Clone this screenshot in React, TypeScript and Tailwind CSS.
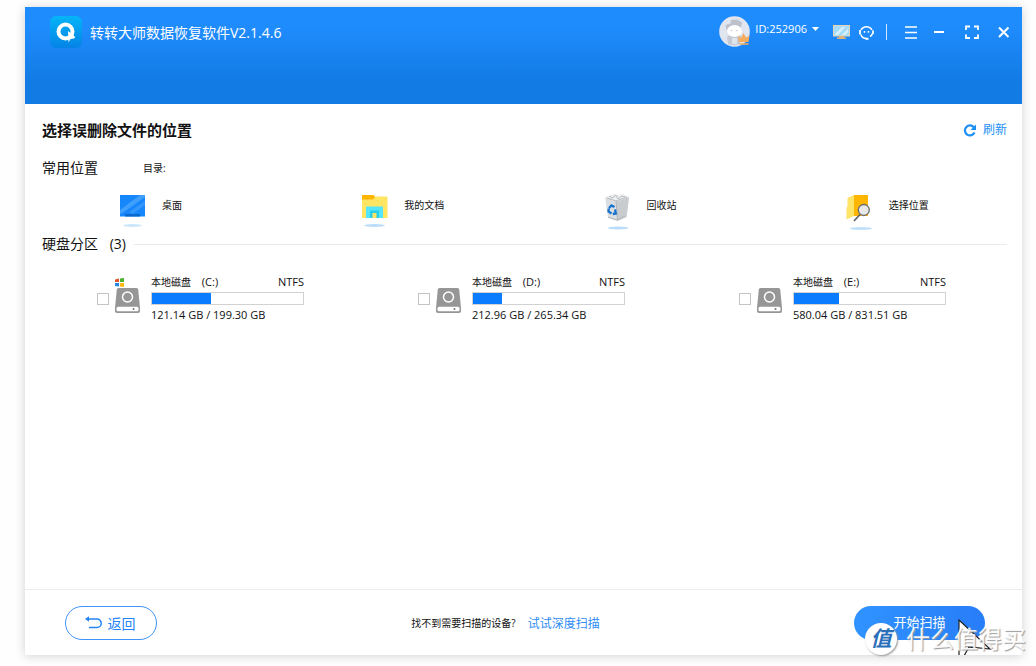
import { FC, ReactNode } from "react";

type PlaceProps = {
  label: string;
  icon: ReactNode;
};

type DiskProps = {
  letter: string;
  used: string;
  total: string;
  percent: number;
  system?: boolean;
};

const disks: DiskProps[] = [
  { letter: "C", used: "121.14", total: "199.30", percent: 39, system: true },
  { letter: "D", used: "212.96", total: "265.34", percent: 19 },
  { letter: "E", used: "580.04", total: "831.51", percent: 30 },
];

const Logo = () => (
  <svg width="32" height="32" viewBox="0 0 32 32">
    <defs>
      <linearGradient id="logo" x1="0" y1="0" x2="0" y2="1">
        <stop offset="0" stopColor="#05b4f8" />
        <stop offset="1" stopColor="#0483e6" />
      </linearGradient>
    </defs>
    <rect width="32" height="32" rx="6" fill="url(#logo)" />
    <circle cx="15.500" cy="15.500" r="7" fill="none" stroke="#fff" strokeWidth="4" />
    <path d="M18 15l7.300 6-1.300 1.500-3.500.5-2 3.500z" fill="#fff" />
  </svg>
);

const Avatar = () => (
  <svg width="31" height="31" viewBox="0 0 31 31">
    <circle cx="15.500" cy="15.500" r="15.300" fill="#e1e5ef" />
    <path d="M8 21c2-3 12-3 15 0l-2 7c-4 1.500-8 1.500-12 0z" fill="#c3c8d3" />
    <path d="M13 22h5v6h-5z" fill="#dfe3ea" />
    <path d="M6.500 9l5-1.500L12 4l6-.500 5 3-1 5 .500 4H8z" fill="#bcc1cc" />
    <ellipse cx="15.500" cy="15" rx="7.500" ry="6" fill="#fff" />
    <circle cx="12.500" cy="14.500" r=".8" fill="#c3c8d3" />
    <circle cx="18" cy="14.500" r=".8" fill="#c3c8d3" />
    <path d="M19 20l3 2 2.500-5 2.500 4.500 3.500-2-1 6.500H20z" fill="#f6ad5d" />
    <path d="M20.500 28h9" stroke="#f6ad5d" strokeWidth="1.500" />
  </svg>
);

const Monitor = () => (
  <svg width="17" height="14" viewBox="0 0 17 14">
    <rect x=".5" y=".5" width="16" height="10.500" fill="#a5dcfa" stroke="#e8d5b4" />
    <path d="M2 9l7-7h3L5 10H2zM9 10l6-6v3l-3 3z" fill="#d8f2ff" />
    <path d="M6 11h5v1.500h2V14H4v-1.500h2z" fill="#e0b27c" />
  </svg>
);

const Service = () => (
  <svg width="15" height="15" viewBox="0 0 15 15" fill="none" stroke="#fff" strokeWidth="1.500">
    <path d="M2 5a6.200 6.200 0 0 1 11 0M1.800 9.500a6 6 0 0 0 5.700 4" />
    <path d="M1 5v4.500M14 5.500V9" strokeWidth="1.800" />
    <path d="M13.500 8.500c-.5 1.500-1.300 2.500-2.500 3" />
    <path d="M5.500 6v1.800M9.500 6v1.800" strokeWidth="1.500" />
    <path d="M6.500 13.800h3" strokeWidth="2" />
  </svg>
);

const DesktopIcon = () => (
  <svg width="27" height="33" viewBox="0 0 27 33">
    <rect x="1" y="1" width="25" height="21.500" fill="#1587fb" />
    <path d="M1 16L21 1h5v2L5 18l-4 2z" fill="#419ffc" />
    <path d="M10 18L26 7v4L14 20z" fill="#3396fb" />
    <rect x="6" y="20" width="15" height="2.500" fill="#0969cf" />
    <ellipse cx="13.500" cy="31.500" rx="9.500" ry="1.500" fill="#cbe6fd" />
  </svg>
);

const FolderIcon = () => (
  <svg width="27" height="33" viewBox="0 0 27 33">
    <path d="M1 1h12l1 1.500h12.500V24H1z" fill="#ffe562" />
    <path d="M1 1h11l2 2-2 2.500H1z" fill="#ffb400" />
    <path d="M5 12.500h17V24h-4v-6.500H9V24H5z" fill="#54e6fc" />
    <path d="M9 24v-7.500h9V24h-2.500v-5h-4v5z" fill="#28cde9" />
    <ellipse cx="13.500" cy="31.500" rx="10.500" ry="1.500" fill="#b9dcfb" />
  </svg>
);

const RecycleIcon = () => (
  <svg width="27" height="36" viewBox="0 0 27 36">
    <path d="M1 3l11 4 13-4-2.500 20-9 4L4 24z" fill="#dcdfe1" />
    <path d="M12 7l13-4-2.500 20-9 4z" fill="#c9ccce" />
    <path d="M1 3l6-2 3-1 5 1 4-1 6 3-13 5z" fill="#eceeef" />
    <path d="M5 2l3 2 4-3 2 4 4-3 3 1M3 4l9 3 11-4M12 7l1.500 19M4 23l9 3 8-4" fill="none" stroke="#a9adb1" strokeWidth=".8" />
    <path d="M5 14l2.500-2.500 3 1.500M11 15.500l.8 4-3 .5M7.500 19.500l-3-2 .2-3" fill="none" stroke="#1672cf" strokeWidth="2.300" />
    <ellipse cx="14" cy="34" rx="10.500" ry="1.500" fill="#b9dcfb" />
  </svg>
);

const SearchFolderIcon = () => (
  <svg width="27" height="36" viewBox="0 0 27 36">
    <path d="M8 1h14v21H8z" fill="#ffb600" />
    <path d="M8 1v21L.5 25.500v-12l1-1V4z" fill="#ffe468" />
    <circle cx="17.800" cy="16" r="5.500" fill="#e6e8ea" stroke="#6b6b6b" strokeWidth="1.300" />
    <path d="M14 20.500L8 27" stroke="#606060" strokeWidth="1.700" />
    <ellipse cx="15" cy="34.500" rx="11" ry="1.300" fill="#b9dcfb" />
  </svg>
);

const places: PlaceProps[] = [
  { label: "桌面", icon: <DesktopIcon /> },
  { label: "我的文档", icon: <FolderIcon /> },
  { label: "回收站", icon: <RecycleIcon /> },
  { label: "选择位置", icon: <SearchFolderIcon /> },
];

const DiskIcon: FC<{ system?: boolean }> = ({ system }) => (
  <svg width="25" height="38" viewBox="0 0 25 38">
    {system && (
      <g>
        <path d="M0 1.500l4-1v3.500H0z" fill="#e2542b" />
        <path d="M5 .5l4-.5v4H5z" fill="#4caf2e" />
        <path d="M0 5h4v3.500L0 8z" fill="#2387e4" />
        <path d="M5 5h4v4l-4-.5z" fill="#fdb813" />
      </g>
    )}
    <path d="M3.500 10h18q1.500 0 1.700 1.500L25 30v3q0 2-2 2H2q-2 0-2-2v-3l1.800-18.500Q2 10 3.500 10z" fill="#969696" />
    <circle cx="12.500" cy="19" r="5" fill="none" stroke="#fff" strokeWidth="1.500" />
    <rect x="1.500" y="28.800" width="22" height="4.500" rx="1.500" fill="#fff" />
    <circle cx="18.500" cy="31" r="1" fill="#777" />
  </svg>
);

const Place: FC<PlaceProps> = ({ label, icon }) => (
  <button type="button" className="flex h-9 items-start pl-[77px] text-[10px] leading-[22px]">
    <span className="w-[27px]">{icon}</span>
    <span className="ml-4">{label}</span>
  </button>
);

const Disk: FC<DiskProps> = ({ letter, used, total, percent, system }) => (
  <label className="flex pl-[55px] text-[11px]">
    <input
      type="checkbox"
      className="mt-[19px] h-3 w-3 shrink-0 appearance-none border border-[#c4c4c4] bg-white checked:bg-[#0a7cff]"
    />
    <span className="ml-[6px] mt-1 shrink-0">
      <DiskIcon system={system} />
    </span>
    <span className="ml-[11px] w-[153px]">
      <span className="flex justify-between leading-4">
        <span>
          <span className="mr-2 text-[10px]">本地磁盘</span> ({letter}:)
        </span>
        <span>NTFS</span>
      </span>
      <span className="mt-[2px] block h-[13px] border border-[#d2d2d2]">
        <span className="block h-full bg-[#0a7cff]" style={{ width: `${percent}%` }} />
      </span>
      <span className="mt-[2px] block leading-4">
        {used} GB / {total} GB
      </span>
    </span>
  </label>
);

const Header = () => (
  <header className="flex h-[97px] items-start bg-linear-to-b from-[#1f8cfe] from-20% to-[#127be4] to-75% pl-[25px] pr-[11px] pt-[9px] text-white">
    <div className="flex h-8 flex-1 items-center">
      <Logo />
      <h1 className="ml-2 text-[14px]">转转大师数据恢复软件V2.1.4.6</h1>
    </div>
    <div className="flex h-8 items-center">
      <button type="button" className="flex items-center pb-[2px]">
        <Avatar />
        <span className="mb-1 ml-[5px] text-[11px] leading-4">ID:252906</span>
        <svg className="mb-1 ml-[5px]" width="7" height="4" viewBox="0 0 7 4">
          <path d="M0 0h7L3.500 4z" fill="#fff" />
        </svg>
      </button>
      <button type="button" aria-label="远程" className="ml-[14px]">
        <Monitor />
      </button>
      <button type="button" aria-label="客服" className="ml-[9px]">
        <Service />
      </button>
      <span className="ml-3 h-4 w-px bg-white/80" />
      <button type="button" aria-label="菜单" className="ml-[17px]">
        <svg width="14" height="14" viewBox="0 0 14 14" stroke="#fff" strokeWidth="1.700">
          <path d="M1 2h12M1 7.500h12M1 13h12" />
        </svg>
      </button>
      <button type="button" aria-label="最小化" className="ml-[14px]">
        <svg width="14" height="14" viewBox="0 0 14 14" stroke="#fff" strokeWidth="2">
          <path d="M2 7h10" />
        </svg>
      </button>
      <button type="button" aria-label="最大化" className="ml-[19px]">
        <svg width="14" height="14" viewBox="0 0 14 14" fill="none" stroke="#fff" strokeWidth="1.800">
          <path d="M1 5V1.500h4M9 1.500h4V5M13 9.500V13H9M5 13H1V9.500" />
        </svg>
      </button>
      <button type="button" aria-label="关闭" className="ml-[18px]">
        <svg width="14" height="14" viewBox="0 0 14 14" stroke="#fff" strokeWidth="2">
          <path d="M2 2.500l9.500 9.500M11.500 2.500L2 12" />
        </svg>
      </button>
    </div>
  </header>
);

const Footer = () => (
  <footer className="flex h-[66px] items-center justify-between border-t border-[#ececef] pl-10 pr-[37px] pt-px">
    <button
      type="button"
      className="flex h-[34px] w-[92px] items-center justify-center rounded-full border border-[#3f93fb] pr-[2px] text-[14px] text-[#2384f8]"
    >
      <svg className="mr-[6px]" width="17" height="14" viewBox="0 0 17 14" fill="none">
        <path d="M3 3h9a4.200 4.200 0 0 1 0 8.500H4" stroke="#2384f8" strokeWidth="1.500" />
        <path d="M0 3L4 .3v5.400z" fill="#2384f8" />
      </svg>
      返回
    </button>
    <p className="flex items-center text-[10px] leading-6">
      找不到需要扫描的设备?
      <a href="#deep" className="ml-3 pt-[2px] text-[12px] text-[#2d8cf5]">
        试试深度扫描
      </a>
    </p>
    <button
      type="button"
      className="h-[34px] w-[131px] rounded-full bg-linear-to-r from-[#3093ff] to-[#287df9] text-[13px] text-white"
    >
      开始扫描
    </button>
  </footer>
);

// cursor and site mark sit over the lower right corner of the window
const Overlay = () => (
  <div className="pointer-events-none absolute -right-1 bottom-0 flex items-center">
    <svg className="absolute -top-1 left-[93px]" width="34" height="36" viewBox="0 0 34 36">
      <path d="M1 1v36h5l5-9 21 2z" fill="#fff" />
      <path d="M1 37V1l31 29-21-2-5 9M11 28l5 1" fill="none" stroke="#222" strokeWidth="1.200" />
    </svg>
    <span className="relative flex h-8 w-8 items-center justify-center rounded-full bg-white text-[21px] font-bold italic text-[#2a6fba] shadow-[1px_1px_2px_#999]">
      值
    </span>
    <span className="relative ml-[9px] text-[24px] leading-8 text-white/90 text-shadow-[1px_1px_1px_#999]">
      什么值得买
    </span>
  </div>
);

export default function App() {
  return (
    <div className="flex min-h-screen bg-[#fefefe] pb-[11px] pl-[25px] pr-[14px] pt-[7px] font-['Open_Sans','Noto_Sans_CJK_SC',sans-serif] text-[#111]">
      <div className="relative flex flex-1 flex-col bg-white shadow-[0_1px_10px_rgba(0,0,0,0.18)]">
        <Header />
        <main className="flex-1 pl-[17px] pt-[13px]">
          <div className="flex items-center justify-between pr-[15px]">
            <h2 className="text-[15px] font-bold leading-6">选择误删除文件的位置</h2>
            <button type="button" className="flex items-center pt-px text-[12px] leading-6 text-[#1c8ff5]">
              <svg className="mr-[6px]" width="14" height="13" viewBox="0 0 14 13" fill="none">
                <path d="M11 3.500A5 5 0 1 0 11.500 8.500" stroke="#1c8ff5" strokeWidth="2.200" />
                <path d="M13 .5v5.500H7.500z" fill="#1c8ff5" />
              </svg>
              刷新
            </button>
          </div>
          <div className="mt-[14px] flex items-center leading-6">
            <h3 className="w-[101px] text-[14px]">常用位置</h3>
            <span className="text-[10px]">目录:</span>
          </div>
          <div className="mt-[14px] grid grid-cols-4 pr-[11px]">
            {places.map((place) => (
              <Place key={place.label} {...place} />
            ))}
          </div>
          <div className="mt-[2px] flex items-center pr-[15px]">
            <h3 className="text-[14px] leading-6">
              硬盘分区 <span className="ml-2">(3)</span>
            </h3>
            <span className="ml-2 h-px flex-1 bg-[#e8eaec]" />
          </div>
          <div className="mt-[18px] grid grid-cols-3 pr-[17px]">
            {disks.map((disk) => (
              <Disk key={disk.letter} {...disk} />
            ))}
          </div>
        </main>
        <Footer />
        <Overlay />
      </div>
    </div>
  );
}
